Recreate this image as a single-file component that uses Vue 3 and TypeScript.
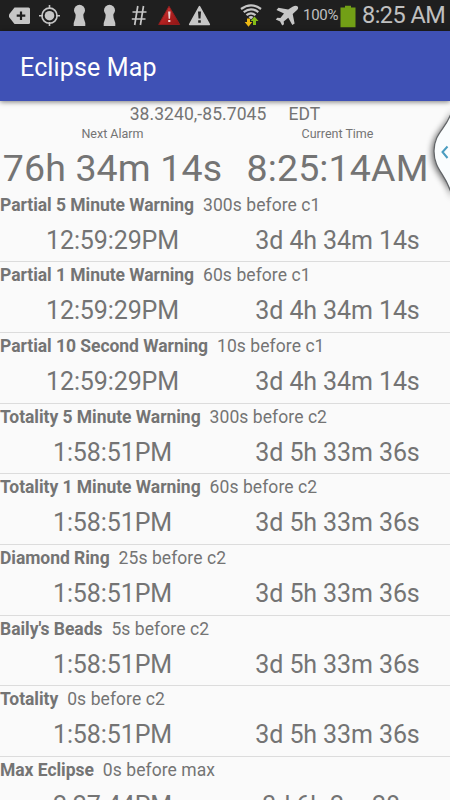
<script setup lang="ts">
interface Alarm {
  title: string
  offset: string
  time: string
  countdown: string
}

const alarms: Alarm[] = [
  { title: 'Partial 5 Minute Warning', offset: '300s before c1', time: '12:59:29PM', countdown: '3d 4h 34m 14s' },
  { title: 'Partial 1 Minute Warning', offset: '60s before c1', time: '12:59:29PM', countdown: '3d 4h 34m 14s' },
  { title: 'Partial 10 Second Warning', offset: '10s before c1', time: '12:59:29PM', countdown: '3d 4h 34m 14s' },
  { title: 'Totality 5 Minute Warning', offset: '300s before c2', time: '1:58:51PM', countdown: '3d 5h 33m 36s' },
  { title: 'Totality 1 Minute Warning', offset: '60s before c2', time: '1:58:51PM', countdown: '3d 5h 33m 36s' },
  { title: 'Diamond Ring', offset: '25s before c2', time: '1:58:51PM', countdown: '3d 5h 33m 36s' },
  { title: "Baily's Beads", offset: '5s before c2', time: '1:58:51PM', countdown: '3d 5h 33m 36s' },
  { title: 'Totality', offset: '0s before c2', time: '1:58:51PM', countdown: '3d 5h 33m 36s' },
  { title: 'Max Eclipse', offset: '0s before max', time: '2:27:44PM', countdown: '3d 6h 2m 28s' },
]
</script>

<template>
  <div class="screen">
    <header class="status">
      <svg class="icons" width="300" height="31" viewBox="0 0 300 31" fill="#c6c6c6">
        <path d="M14.5 7.5H28.5Q30 7.5 30 9V22.5Q30 24 28.5 24H14.5L9 17V14.5Z" />
        <path d="M21 11.5V20M16.7 15.7H25.3" stroke="#1f1f1f" stroke-width="2.2" />
        <g fill="none" stroke="#c6c6c6" stroke-width="1.6">
          <circle cx="49.5" cy="15.7" r="7.6" />
          <path d="M49.5 5V9M49.5 22V26M39 15.7H43M56 15.7H60" />
        </g>
        <circle cx="49.5" cy="15.7" r="4.8" />
        <g v-for="x in [79.5, 109.5]" :key="x" :transform="`translate(${x} 0)`">
          <circle cx="0" cy="10.3" r="5.5" />
          <path d="M-3.6 13H3.6Q3.6 18 5.8 23V26H-5.8V23Q-3.6 18 -3.6 13Z" />
        </g>
        <path d="M137.8 6L134.7 25M143.5 6L140.4 25M132.5 12H146.5M131.8 19H145.5" fill="none" stroke="#c6c6c6" stroke-width="1.7" />
        <defs>
          <linearGradient id="alert" x2="1" y2="1">
            <stop offset="0" stop-color="#d64b49" />
            <stop offset=".5" stop-color="#b32121" />
            <stop offset="1" stop-color="#8c1515" />
          </linearGradient>
        </defs>
        <path d="M169 6.3L179.7 24.5H158.7Z" fill="url(#alert)" stroke="#941d1d" stroke-linejoin="round" />
        <path d="M168.1 11.5H170.5L170 18.7H168.6ZM168.2 20H170.4V22H168.2Z" fill="#ead5d5" />
        <path d="M199.5 6.7L209.3 24.5H189.7Z" stroke="#c6c6c6" stroke-width="1.6" stroke-linejoin="round" />
        <path d="M198 11.5H201L200.5 18.5H198.5ZM198.2 20.2H200.8V22.7H198.2Z" fill="#1f1f1f" />
        <g fill="none" stroke="#c6c6c6" stroke-width="2.2">
          <path d="M241 9Q251 1.7 261 9M243.7 12.1Q251 6.5 258.3 12.1M246.5 15.2Q251 11.4 255.5 15.2" />
        </g>
        <path d="M248.5 17Q251 15 253.5 17L251 19.5Z" />
        <path d="M247 18.5H250V22H252.3L248.5 26.8L244.7 22H247Z" fill="#edb914" />
        <path d="M253 25V21H250.6L254.5 16.4L258.5 21H256V25Z" fill="#86bc18" />
        <path d="M297.7 6.4Q299 8.4 296.5 10.5L292.7 14.1L294.6 23.5L292.3 25L288.3 17.8L283.7 21.5L284 24.2L282.2 25.4L280.1 21.4L275.8 19.4L277.3 17.8L280.4 18L284 13.5L276.5 10L278.4 7.8L288.2 9.6L292.5 6.8Q295.8 4.7 297.7 6.4Z" />
      </svg>
      <span class="percent">100%</span>
      <svg class="battery" width="16" height="23" viewBox="0 0 16 23">
        <path d="M5 .7H11V2.5H15.5V22.3H.5V2.5H5Z" fill="#729f16" />
      </svg>
      <span class="clock">8:25 AM</span>
    </header>
    <div class="toolbar"><h1>Eclipse Map</h1></div>
    <main>
      <section class="summary">
        <p class="location"><span>38.3240,-85.7045</span><span class="zone">EDT</span></p>
        <div class="pair labels"><span>Next Alarm</span><span>Current Time</span></div>
        <div class="pair big"><span>76h 34m 14s</span><span>8:25:14AM</span></div>
      </section>
      <ul>
        <li v-for="alarm in alarms" :key="alarm.title">
          <p class="name"><b>{{ alarm.title }}</b><span>{{ alarm.offset }}</span></p>
          <div class="pair times"><span>{{ alarm.time }}</span><span>{{ alarm.countdown }}</span></div>
        </li>
      </ul>
    </main>
    <svg class="handle" width="34" height="100" viewBox="0 0 34 100">
      <defs>
        <filter id="soft" x="-50%" y="-20%" width="200%" height="140%"><feGaussianBlur stdDeviation="3" /></filter>
      </defs>
      <path d="M36 4C34 20 16 26 16 48C16 68 32 74 36 94Z" fill="#000" opacity=".6" filter="url(#soft)" />
      <path d="M36 5C32 23 18 27 18 46C18 66 32 70 36 92Z" fill="#fafdfe" stroke="#626568" stroke-width="1.2" />
      <path d="M31.5 41.5L26.5 47L31.5 53" fill="none" stroke="#4b9dc0" stroke-width="2" />
    </svg>
  </div>
</template>

<style>
body { margin: 0; }
</style>

<style scoped>
.screen {
  position: relative;
  width: 450px;
  height: 800px;
  overflow: hidden;
  background: #fafafa;
  color: #747474;
  font-family: Roboto, sans-serif;
}
.status {
  display: flex;
  align-items: center;
  height: 31px;
  background: #1f1f1f;
  color: #c0c0c0;
}
.icons { flex: none; }
.percent { width: 37px; margin-left: 3px; font-size: 15px; line-height: 33px; letter-spacing: -.3px; }
.battery { flex: none; margin-top: 2px; }
.clock { margin-left: 6px; font-size: 23.5px; line-height: 31px; letter-spacing: -.55px; white-space: nowrap; }
.toolbar {
  position: relative;
  height: 70px;
  padding-left: 20px;
  background: #3f51b5;
  box-shadow: 0 1px 5px rgba(0, 0, 0, .5);
}
h1 { margin: 0; color: #fff; font-size: 25px; font-weight: 400; line-height: 73px; letter-spacing: .15px; }
p, ul { margin: 0; padding: 0; list-style: none; }
.summary { height: 90.6px; }
.location {
  display: flex;
  justify-content: center;
  padding-top: 3px;
  font-size: 17.5px;
  line-height: 21px;
  letter-spacing: .08px;
}
.zone { margin-left: 22px; }
.pair { display: grid; grid-template-columns: 1fr 1fr; text-align: center; white-space: nowrap; }
.labels { font-size: 12.5px; line-height: 17px; }
.big { font-size: 37.5px; line-height: 53px; letter-spacing: .15px; }
li {
  box-sizing: border-box;
  height: 70.67px;
  border-bottom: 1px solid #dcdcdc;
}
.name { display: flex; gap: 9px; font-size: 17.5px; line-height: 27px; white-space: nowrap; }
.name b { letter-spacing: -.04px; }
.name span { letter-spacing: .07px; }
.times { font-size: 25px; line-height: 44px; letter-spacing: -.1px; }
.handle { position: absolute; top: 105px; right: 0; }
</style>
